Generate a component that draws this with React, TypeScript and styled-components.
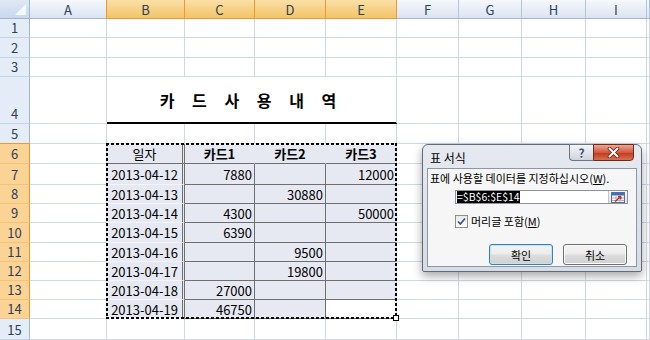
import styled, { createGlobalStyle } from 'styled-components';

const GlobalStyle = createGlobalStyle`
  html, body {
    margin: 0;
    padding: 0;
    background: #ffffff;
    overflow: hidden;
  }
  body {
    font-family: 'Noto Sans CJK KR', 'Noto Sans', sans-serif;
  }
`;

// sheet geometry, taken from the Excel window
const COL_WIDTHS = [30, 77, 78, 70, 71, 71, 62, 63, 64, 61];
const ROW_HEIGHTS = [19, 19, 20, 19, 47, 20, 20, 21, 19, 19, 20, 19, 19, 19, 19, 21];
const LETTERS = ['A', 'B', 'C', 'D', 'E', 'F', 'G', 'H', 'I', 'J'];
const SEL_COLS = [1, 2, 3, 4];
const FIRST_SEL_ROW = 6;
const LAST_SEL_ROW = 14;

const RECORDS: [string, string, string, string][] = [
    ['2013-04-12', '7880', '', '12000'],
    ['2013-04-13', '', '30880', ''],
    ['2013-04-14', '4300', '', '50000'],
    ['2013-04-15', '6390', '', ''],
    ['2013-04-16', '', '9500', ''],
    ['2013-04-17', '', '19800', ''],
    ['2013-04-18', '27000', '', ''],
    ['2013-04-19', '46750', '', ''],
];

const GRID = '#d0d7e5';
const ORANGE = '#f29536';
const TINT = '#e7e9f2';
const RULE = '#6f6f6f';

export default function App() {
    const rows = ROW_HEIGHTS.length - 1;
    const isSelRow = (r: number) => r >= FIRST_SEL_ROW && r <= LAST_SEL_ROW;

    const plainCells = (from: number, to: number, r: number) =>
        LETTERS.slice(from, to).map((l) => <GridCell key={`${l}${r}`} />);

    return (
        <Page>
            <GlobalStyle />
            <Sheet>
                <Corner />
                {LETTERS.map((l, i) => (
                    <ColHead
                        key={l}
                        $active={SEL_COLS.includes(i)}
                        $accentRight={SEL_COLS.includes(i) || SEL_COLS.includes(i + 1)}
                    >
                        {i < 9 ? l : ''}
                    </ColHead>
                ))}

                {Array.from({ length: rows }, (_, k) => {
                    const r = k + 1;
                    const head = (
                        <RowHead
                            key={`h${r}`}
                            $active={isSelRow(r)}
                            $accentBottom={isSelRow(r) || isSelRow(r + 1)}
                        >
                            {r}
                        </RowHead>
                    );

                    if (r === 4) {
                        return [
                            head,
                            <GridCell key="A4" />,
                            <TitleCell key="B4">카 드 사 용 내 역</TitleCell>,
                            ...plainCells(5, 10, r),
                        ];
                    }

                    if (r === 6) {
                        return [
                            head,
                            <GridCell key="A6" />,
                            <TableCell key="B6" $right="double" $bottom="dark">일자</TableCell>,
                            <TableCell key="C6" $right="none" $bottom="dark" $bold>카드1</TableCell>,
                            <TableCell key="D6" $right="none" $bottom="dark" $bold>카드2</TableCell>,
                            <TableCell key="E6" $right="grid" $bottom="dark" $bold>카드3</TableCell>,
                            ...plainCells(5, 10, r),
                        ];
                    }

                    if (isSelRow(r)) {
                        const [date, c1, c2, c3] = RECORDS[r - 7];
                        return [
                            head,
                            <GridCell key={`A${r}`} />,
                            <TableCell key={`B${r}`} $right="double" $bottom="light">{date}</TableCell>,
                            <TableCell key={`C${r}`} $right="dark" $bottom="dark" $align="right">{c1}</TableCell>,
                            <TableCell key={`D${r}`} $right="dark" $bottom="dark" $align="right">{c2}</TableCell>,
                            <TableCell
                                key={`E${r}`}
                                $right="grid"
                                $bottom="dark"
                                $align="right"
                                $plain={r === LAST_SEL_ROW}
                            >
                                {c3}
                            </TableCell>,
                            ...plainCells(5, 10, r),
                        ];
                    }

                    return [head, ...plainCells(0, 10, r)];
                })}

                <Marquee />
            </Sheet>

            <Dialog>
                <TitleBar>
                    <TitleText>표 서식</TitleText>
                    <CaptionButtons>
                        <HelpButton>?</HelpButton>
                        <CloseButton>
                            <svg width="13" height="11" viewBox="0 0 13 11">
                                <path d="M2.5 1.5 L10.5 9.5 M10.5 1.5 L2.5 9.5" stroke="#6b2415" strokeWidth="3.6" strokeLinecap="round" />
                                <path d="M2.5 1.5 L10.5 9.5 M10.5 1.5 L2.5 9.5" stroke="#ffffff" strokeWidth="2" strokeLinecap="round" />
                            </svg>
                        </CloseButton>
                    </CaptionButtons>
                </TitleBar>

                <Client>
                    <Prompt>
                        표에 사용할 데이터를 지정하십시오(<u>W</u>).
                    </Prompt>
                    <RefEdit>
                        <Selected>=$B$6:$E$14</Selected>
                        <RangeButton>
                            <svg width="14" height="11" viewBox="0 0 14 11">
                                <rect x="0.5" y="0.5" width="13" height="10" fill="#ffffff" stroke="#5b6f94" />
                                <rect x="1" y="1" width="12" height="2.5" fill="#3f6fbf" />
                                <path d="M1 6 H13 M1 8.5 H13 M5 3.5 V10 M9 3.5 V10" stroke="#9fb0cc" strokeWidth="1" />
                                <path d="M4 9.5 L10 4.5 M10 4.5 L7 4.8 M10 4.5 L9.6 7.3" stroke="#d8261a" strokeWidth="1.4" fill="none" />
                            </svg>
                        </RangeButton>
                    </RefEdit>
                    <CheckRow>
                        <CheckBox>
                            <svg width="11" height="11" viewBox="0 0 11 11">
                                <path d="M2 5.5 L4.4 8 L9 2.5" stroke="#3c4f86" strokeWidth="1.7" fill="none" />
                            </svg>
                        </CheckBox>
                        <span>
                            머리글 포함(<u>M</u>)
                        </span>
                    </CheckRow>
                    <ButtonRow>
                        <PushButton $focused>확인</PushButton>
                        <PushButton>취소</PushButton>
                    </ButtonRow>
                </Client>
            </Dialog>
        </Page>
    );
}

const Page = styled.div`
  position: relative;
  width: 650px;
  height: 340px;
  overflow: hidden;
  background: #ffffff;
`;

const Sheet = styled.div`
  position: relative;
  display: grid;
  grid-template-columns: ${COL_WIDTHS.map((w) => `${w}px`).join(' ')} 1fr;
  grid-template-rows: ${ROW_HEIGHTS.map((h) => `${h}px`).join(' ')};
  width: 650px;
  font-size: 13px;
  color: #000000;
`;

const Corner = styled.div`
  position: relative;
  box-sizing: border-box;
  background: linear-gradient(#dfe8f5, #c9d8ee);
  border-right: 1px solid #9eb6ce;
  border-bottom: 1px solid #9eb6ce;

  &::after {
    content: '';
    position: absolute;
    right: 3px;
    bottom: 3px;
    width: 0;
    height: 0;
    border-left: 11px solid transparent;
    border-bottom: 11px solid #f4f7fb;
  }
`;

const ColHead = styled.div<{ $active?: boolean; $accentRight?: boolean }>`
  box-sizing: border-box;
  display: flex;
  align-items: center;
  justify-content: center;
  overflow: hidden;
  font-size: 13px;
  color: #2b3f5c;
  background: ${({ $active }) =>
    $active ? 'linear-gradient(#fae0a6, #f2c467)' : 'linear-gradient(#f5f8fc, #dbe4f0)'};
  border-right: 1px solid ${({ $accentRight }) => ($accentRight ? ORANGE : '#b4c4da')};
  border-bottom: 1px solid ${({ $active }) => ($active ? ORANGE : '#9eb6ce')};
`;

const RowHead = styled.div<{ $active?: boolean; $accentBottom?: boolean }>`
  box-sizing: border-box;
  display: flex;
  align-items: flex-end;
  justify-content: center;
  padding-bottom: 1px;
  font-size: 13px;
  line-height: 17px;
  color: #2b3f5c;
  background: ${({ $active }) => ($active ? '#fbd394' : '#e4ecf7')};
  border-right: 1px solid ${({ $active }) => ($active ? ORANGE : '#9eb6ce')};
  border-bottom: 1px solid ${({ $accentBottom, $active }) =>
    $active ? '#f6c27a' : $accentBottom ? ORANGE : '#c5d3e6'};
`;

const GridCell = styled.div`
  box-sizing: border-box;
  border-right: 1px solid ${GRID};
  border-bottom: 1px solid ${GRID};
`;

const TitleCell = styled.div`
  grid-column: span 4;
  box-sizing: border-box;
  display: flex;
  align-items: center;
  justify-content: center;
  border-right: 1px solid ${GRID};
  border-bottom: 2px solid #000000;
  font-size: 16px;
  font-weight: 700;
  letter-spacing: 7px;
`;

type Edge = 'none' | 'grid' | 'dark' | 'double' | 'light';

const edge = (e: Edge) => {
    switch (e) {
        case 'none':
            return `1px solid ${TINT}`;
        case 'dark':
            return `1px solid ${RULE}`;
        case 'double':
            return `3px double ${RULE}`;
        case 'light':
            return '1px solid #f3f4f9';
        default:
            return `1px solid ${GRID}`;
    }
};

const TableCell = styled.div<{
    $right: Edge;
    $bottom: Edge;
    $align?: 'center' | 'right';
    $bold?: boolean;
    $plain?: boolean;
}>`
  box-sizing: border-box;
  display: flex;
  align-items: center;
  justify-content: ${({ $align }) => ($align === 'right' ? 'flex-end' : 'center')};
  padding: 0 2px;
  white-space: nowrap;
  font-weight: ${({ $bold }) => ($bold ? 700 : 400)};
  background: ${({ $plain }) => ($plain ? '#ffffff' : TINT)};
  border-right: ${({ $right }) => edge($right)};
  border-bottom: ${({ $bottom }) => edge($bottom)};
`;

const Marquee = styled.div`
  position: absolute;
  grid-column: 3 / 7;
  grid-row: 7 / 16;
  top: -1px;
  left: -1px;
  right: 0;
  bottom: 0;
  pointer-events: none;
  background:
    repeating-linear-gradient(90deg, #000 0 3px, transparent 3px 5px) top left / 100% 2px no-repeat,
    repeating-linear-gradient(90deg, #000 0 3px, transparent 3px 5px) bottom left / 100% 2px no-repeat,
    repeating-linear-gradient(180deg, #000 0 3px, transparent 3px 5px) top left / 2px 100% no-repeat,
    repeating-linear-gradient(180deg, #000 0 3px, transparent 3px 5px) top right / 2px 100% no-repeat;

  &::after {
    content: '';
    position: absolute;
    right: -2px;
    bottom: -2px;
    width: 4px;
    height: 4px;
    background: #ffffff;
    border: 1px solid #000000;
  }
`;

const Dialog = styled.div`
  position: absolute;
  left: 422px;
  top: 144px;
  width: 220px;
  height: 128px;
  box-sizing: border-box;
  display: flex;
  flex-direction: column;
  padding: 0 4px 4px 4px;
  border: 1px solid #5f6a7a;
  border-radius: 6px 6px 2px 2px;
  background: linear-gradient(#e6eaf0, #d6dce4);
  box-shadow: 0 4px 10px rgba(0, 0, 0, 0.35);
  font-size: 11px;
  color: #000000;
`;

const TitleBar = styled.div`
  height: 23px;
  display: flex;
  align-items: flex-start;
  justify-content: space-between;
`;

const TitleText = styled.div`
  padding: 6px 0 0 3px;
  font-size: 12px;
  line-height: 14px;
`;

const CaptionButtons = styled.div`
  display: flex;
  margin: -1px 3px 0 0;
`;

const HelpButton = styled.div`
  width: 24px;
  height: 17px;
  box-sizing: border-box;
  display: flex;
  align-items: center;
  justify-content: center;
  border: 1px solid #6b7583;
  border-right: none;
  border-radius: 0 0 0 4px;
  background: linear-gradient(#f3f5f8, #cdd4de);
  font-size: 12px;
  font-weight: 700;
  color: #3d4f68;
  text-shadow: 0 1px 0 #ffffff;
`;

const CloseButton = styled.div`
  width: 41px;
  height: 17px;
  box-sizing: border-box;
  display: flex;
  align-items: center;
  justify-content: center;
  border: 1px solid #6e2a1c;
  border-radius: 0 0 4px 0;
  background: linear-gradient(#e9a897, #d2583e 50%, #c1371c 51%, #d8704f);
`;

const Client = styled.div`
  flex: 1;
  display: flex;
  flex-direction: column;
  border: 1px solid #8e97a5;
  background: #f6f6f6;
`;

const Prompt = styled.div`
  margin: 2px 0 0 2px;
  line-height: 14px;
  white-space: nowrap;
`;

const RefEdit = styled.div`
  margin: 5px 0 0 27px;
  width: 173px;
  height: 14px;
  box-sizing: border-box;
  display: flex;
  align-items: center;
  justify-content: space-between;
  border: 1px solid #8d9199;
  background: #ffffff;
`;

const Selected = styled.span`
  margin-left: 1px;
  height: 12px;
  line-height: 12px;
  font-size: 10.5px;
  background: #000000;
  color: #ffffff;
`;

const RangeButton = styled.div`
  width: 18px;
  height: 12px;
  display: flex;
  align-items: center;
  justify-content: center;
  background: linear-gradient(#fbfbfb, #e2e2e2);
  border-left: 1px solid #c4c4c4;
`;

const CheckRow = styled.div`
  margin: 10px 0 0 27px;
  height: 14px;
  display: flex;
  align-items: center;
  gap: 3px;
  line-height: 14px;
`;

const CheckBox = styled.div`
  width: 13px;
  height: 13px;
  box-sizing: border-box;
  display: flex;
  align-items: center;
  justify-content: center;
  border: 1px solid #8f8f8f;
  background: linear-gradient(#e8e8e8, #ffffff);
`;

const ButtonRow = styled.div`
  margin-top: 16px;
  padding-right: 9px;
  display: flex;
  justify-content: flex-end;
  gap: 10px;
`;

const PushButton = styled.div<{ $focused?: boolean }>`
  width: 64px;
  height: 21px;
  box-sizing: border-box;
  display: flex;
  align-items: center;
  justify-content: center;
  border: 1px solid ${({ $focused }) => ($focused ? '#3c7fb1' : '#707070')};
  border-radius: 3px;
  box-shadow: inset 0 0 0 1px ${({ $focused }) => ($focused ? '#bfe4f7' : '#fcfcfc')};
  background: linear-gradient(#f3f3f3 0%, #ececec 48%, #dddddd 52%, #d0d0d0 100%);
  font-size: 11px;
`;
